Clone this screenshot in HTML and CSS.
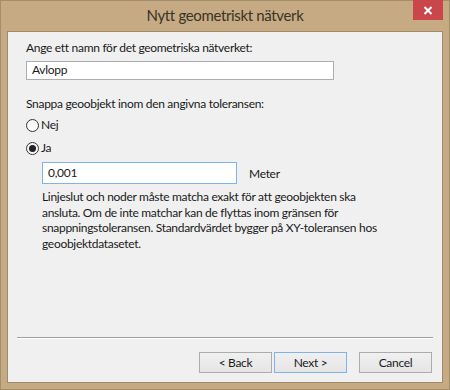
FILE: index.html
```html
<!DOCTYPE html>
<html lang="sv">
<head>
<meta charset="utf-8">
<title>Nytt geometriskt nätverk</title>
<link rel="stylesheet" href="styles.css">
</head>
<body>
<div class="window">
  <div class="titlebar">
    <span></span>
    <div class="title">Nytt geometriskt nätverk</div>
    <div class="close">
      <svg width="10" height="9" viewBox="0 0 10 9"><path d="M1.5 1 L8.5 8 M8.5 1 L1.5 8" stroke="#fff" stroke-width="2" fill="none"/></svg>
    </div>
  </div>
  <div class="content">
    <div class="main">
      <div class="label first">Ange ett namn för det geometriska nätverket:</div>
      <div class="textbox name">Avlopp</div>
      <div class="label second">Snappa geoobjekt inom den angivna toleransen:</div>
      <div class="radio-row nej"><span class="radio"></span><span>Nej</span></div>
      <div class="radio-row ja"><span class="radio checked"></span><span>Ja</span></div>
      <div class="tol-row">
        <div class="textbox tol">0,001</div>
        <span class="unit">Meter</span>
      </div>
      <p class="note">Linjeslut och noder måste matcha exakt för att geoobjekten ska<br>ansluta. Om de inte matchar kan de flyttas inom gränsen för<br>snappningstoleransen. Standardvärdet bygger på XY-toleransen hos<br>geoobjektdatasetet.</p>
    </div>
    <div class="separator"></div>
    <div class="buttons">
      <div class="btn">&lt; Back</div>
      <div class="btn default">Next &gt;</div>
      <div class="btn cancel">Cancel</div>
    </div>
  </div>
</div>
</body>
</html>
```
FILE: styles.css
```css
html, body {
  margin: 0;
  padding: 0;
}
body {
  width: 450px;
  height: 390px;
  overflow: hidden;
  font-family: Lato, "Noto Sans", sans-serif;
  font-size: 12px;
  letter-spacing: -0.3px;
  color: #1a1a1a;
}
.window {
  box-sizing: border-box;
  width: 450px;
  height: 390px;
  background: #c5aa84;
  border: 1px solid #a48d6b;
  padding: 0 6px 6px 6px;
  display: flex;
  flex-direction: column;
}
.titlebar {
  height: 30px;
  display: grid;
  grid-template-columns: 1fr auto 1fr;
  align-items: start;
}
.title {
  font-family: Lato, "Noto Sans", sans-serif;
  font-size: 15px;
  letter-spacing: -0.35px;
  color: #3b3324;
  line-height: 30px;
  margin-top: -1px;
}
.close {
  justify-self: end;
  width: 30px;
  height: 20px;
  margin-top: -1px;
  background: #c9474b;
  display: flex;
  align-items: center;
  justify-content: center;
}
.content {
  flex: 1;
  background: #f0f0f0;
  border: 1px solid #a08a68;
  display: flex;
  flex-direction: column;
}
.main {
  flex: 1;
  padding: 8px 0 0 18px;
}
.label {
  line-height: 16px;
}
.textbox {
  box-sizing: border-box;
  background: #fff;
  border: 1px solid #abadb3;
  line-height: 16px;
  padding: 0 5px;
}
.textbox.name {
  width: 308px;
  height: 19px;
  margin-top: 5px;
}
.label.second {
  margin-top: 16px;
}
.radio-row {
  display: flex;
  align-items: center;
  gap: 2px;
  height: 16px;
  line-height: 16px;
}
.radio-row.nej {
  margin-top: 5px;
}
.radio-row.ja {
  margin-top: 7px;
}
.radio {
  box-sizing: border-box;
  width: 13px;
  height: 13px;
  border-radius: 50%;
  border: 1px solid #333;
  background: linear-gradient(#f4f4f4, #ffffff);
  display: flex;
  align-items: center;
  justify-content: center;
}
.radio.checked::after {
  content: "";
  width: 7px;
  height: 7px;
  border-radius: 50%;
  background: #222;
}
.tol-row {
  display: flex;
  align-items: center;
  margin-top: 6px;
  padding-left: 16px;
}
.textbox.tol {
  width: 195px;
  height: 22px;
  line-height: 20px;
  border-color: #7eb4ea;
}
.unit {
  margin-left: 12px;
}
.note {
  margin: 5px 0 0 16px;
  line-height: 15.5px;
}
.separator {
  margin: 0 9px 0 9px;
  height: 1px;
  background: #a0a0a0;
  border-bottom: 1px solid #fff;
}
.buttons {
  display: flex;
  justify-content: flex-end;
  padding: 13px 10px 9px 0;
}
.btn {
  box-sizing: border-box;
  width: 73px;
  height: 21px;
  border: 1px solid #acacac;
  background: linear-gradient(#f0f0f0, #e5e5e5);
  text-align: center;
  line-height: 19px;
  margin-left: 2px;
}
.btn.default {
  border-color: #7eb4ea;
}
.btn.cancel {
  margin-left: 12px;
}
```
